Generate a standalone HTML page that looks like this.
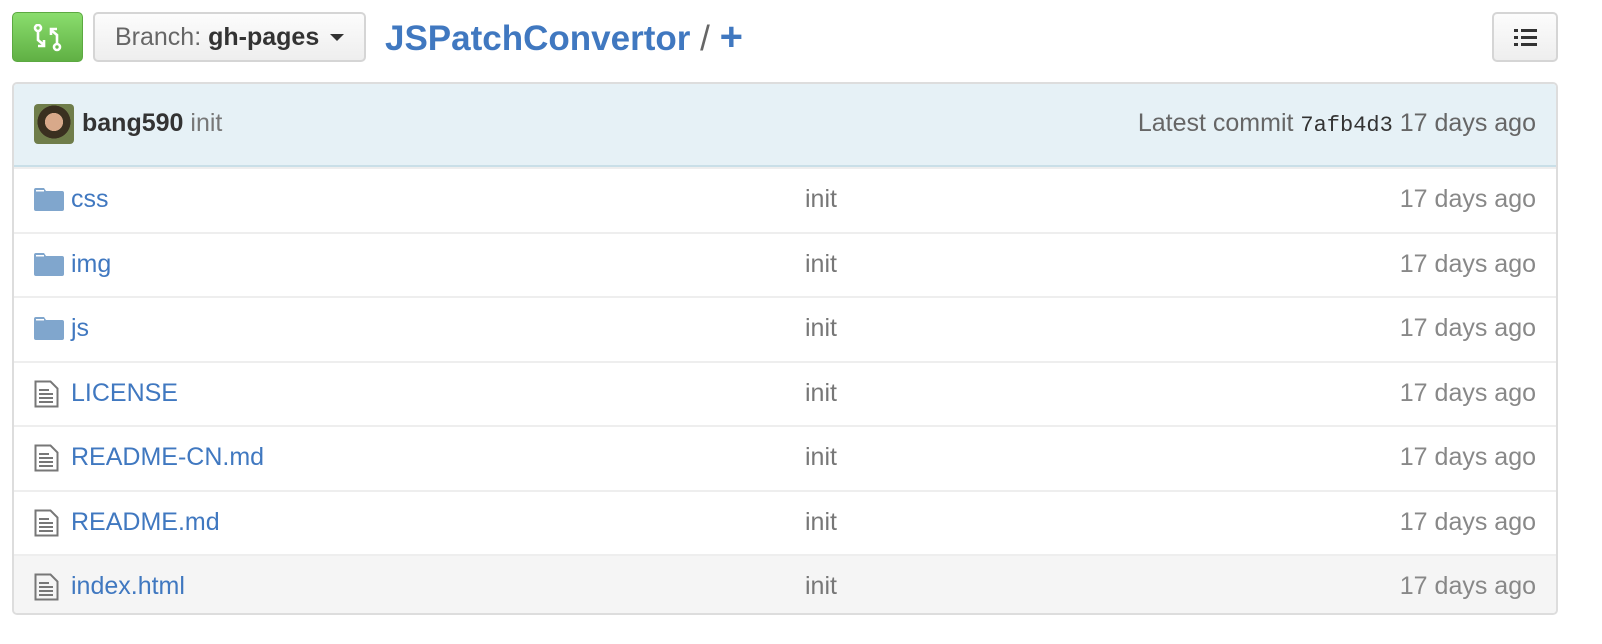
<!DOCTYPE html>
<html><head><style>
body{margin:0;background:#fff;font-family:"Liberation Sans",Arial,sans-serif;width:1602px;height:644px;overflow:hidden;position:relative}
.abs{position:absolute}
.btn{position:absolute;top:12px;height:50px;border-radius:5px;box-sizing:border-box}
.box{position:absolute;left:12px;top:82px;width:1546px;height:533px;border:2px solid #ddd;border-radius:5px;box-sizing:border-box;overflow:hidden}
.hdr{height:81px;background:#e6f1f6;border-bottom:2px solid #c9dfe8;position:relative;font-size:25px}
.row{height:64.5px;border-top:2px solid #eee;box-sizing:border-box;position:relative;font-size:25px;line-height:60px}
.row:first-of-type{border-top:none}
.name{position:absolute;left:57px;color:#4078c0}
.msg{position:absolute;left:791px;color:#777}
.age{position:absolute;right:20px;color:#888}
.ic{position:absolute;left:20px;top:19px}
</style></head><body>
<div class="btn" style="left:12px;width:71px;background:linear-gradient(#8add6d,#60b044);border:1px solid #5ca941">
<svg class="abs" style="left:20px;top:11px" width="30" height="28" viewBox="0 0 30 28" fill="none" stroke="#fff" stroke-width="2.6"><circle cx="5" cy="4" r="3"/><path d="M5 7v9l6 5M11 16v6h-6"/><circle cx="24" cy="23" r="3"/><path d="M24 20v-9l-6-5M18 11V5h6"/></svg></div>
<div class="btn" style="left:93px;width:273px;background:linear-gradient(#fcfcfc,#eee);border:2px solid #d5d5d5;font-size:25px;line-height:46px;padding-left:20px;color:#666">Branch: <b style="color:#333">gh-pages</b> <span style="display:inline-block;border:7px solid transparent;border-top:7px solid #333;vertical-align:-3px;margin-left:4px"></span></div>
<div class="abs" style="left:385px;top:14px;font-size:35px;line-height:46px;color:#4078c0"><b>JSPatchConvertor</b> <span style="color:#666">/</span> <b style="font-size:40px">+</b></div>
<div class="btn" style="left:1492px;width:66px;background:linear-gradient(#fcfcfc,#eee);border:2px solid #d5d5d5">
<svg class="abs" style="left:20px;top:13px" width="24" height="22"><g fill="#333"><rect x="0" y="2" width="4" height="3"/><rect x="0" y="9" width="4" height="3"/><rect x="0" y="16" width="4" height="3"/><rect x="7" y="2" width="16" height="3"/><rect x="7" y="9" width="16" height="3"/><rect x="7" y="16" width="16" height="3"/></g></svg></div>
<div class="box">
<div class="hdr">
<div class="abs" style="left:20px;top:20px;width:40px;height:40px;border-radius:4px;background:radial-gradient(circle at 50% 45%,#d8a98a 0 30%,#3a3020 31% 55%,#6f7d4a 56%)"></div>
<div class="abs" style="left:68px;top:25px;color:#333"><b>bang590</b> <span style="color:#777">init</span></div>
<div class="abs" style="right:20px;top:25px;color:#666">Latest commit <span style="font-family:'Liberation Mono',monospace;font-size:22px;color:#333">7afb4d3</span> 17 days ago</div>
</div>
<div class="row"><svg class="ic" width="30" height="24"><path d="M0 2q0-2 2-2h8l2 3h16q2 0 2 2v16q0 2-2 2H2q-2 0-2-2z" fill="#80a6cd"/><rect x="2" y="2" width="8" height="1.5" fill="#fff"/></svg><span class="name">css</span><span class="msg">init</span><span class="age">17 days ago</span></div>
<div class="row"><svg class="ic" width="30" height="24"><path d="M0 2q0-2 2-2h8l2 3h16q2 0 2 2v16q0 2-2 2H2q-2 0-2-2z" fill="#80a6cd"/><rect x="2" y="2" width="8" height="1.5" fill="#fff"/></svg><span class="name">img</span><span class="msg">init</span><span class="age">17 days ago</span></div>
<div class="row"><svg class="ic" width="30" height="24"><path d="M0 2q0-2 2-2h8l2 3h16q2 0 2 2v16q0 2-2 2H2q-2 0-2-2z" fill="#80a6cd"/><rect x="2" y="2" width="8" height="1.5" fill="#fff"/></svg><span class="name">js</span><span class="msg">init</span><span class="age">17 days ago</span></div>
<div class="row"><svg class="ic" width="26" height="28" style="top:17px"><path d="M1.5 1.5h15l7 7v18h-22z" fill="none" stroke="#777" stroke-width="2"/><path d="M5 10h10M5 14h14M5 18h14M5 22h14" stroke="#777" stroke-width="2"/></svg><span class="name">LICENSE</span><span class="msg">init</span><span class="age">17 days ago</span></div>
<div class="row"><svg class="ic" width="26" height="28" style="top:17px"><path d="M1.5 1.5h15l7 7v18h-22z" fill="none" stroke="#777" stroke-width="2"/><path d="M5 10h10M5 14h14M5 18h14M5 22h14" stroke="#777" stroke-width="2"/></svg><span class="name">README-CN.md</span><span class="msg">init</span><span class="age">17 days ago</span></div>
<div class="row"><svg class="ic" width="26" height="28" style="top:17px"><path d="M1.5 1.5h15l7 7v18h-22z" fill="none" stroke="#777" stroke-width="2"/><path d="M5 10h10M5 14h14M5 18h14M5 22h14" stroke="#777" stroke-width="2"/></svg><span class="name">README.md</span><span class="msg">init</span><span class="age">17 days ago</span></div>
<div class="row" style="background:#f5f5f5"><svg class="ic" width="26" height="28" style="top:17px"><path d="M1.5 1.5h15l7 7v18h-22z" fill="none" stroke="#777" stroke-width="2"/><path d="M5 10h10M5 14h14M5 18h14M5 22h14" stroke="#777" stroke-width="2"/></svg><span class="name">index.html</span><span class="msg">init</span><span class="age">17 days ago</span></div>
</div>
</body></html>
